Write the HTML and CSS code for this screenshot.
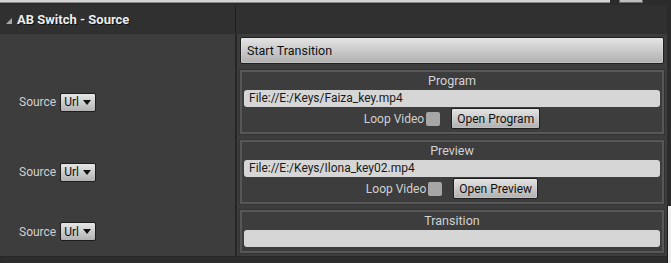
FILE: index.html
```html
<!DOCTYPE html>
<html lang="en">
<head>
    <meta charset="UTF-8">
    <title>AB Switch - Source</title>
    <link rel="stylesheet" href="styles.css">
</head>
<body>
    <div class="topbar">
        <div class="topfield"></div>
        <div class="topbtn"></div>
    </div>

    <div class="frame">
        <div class="details">
            <div class="header">
                <div class="head-left"><span class="arrow"></span>AB Switch - Source</div>
                <div class="head-right"></div>
            </div>

            <div class="row">
                <div class="left"></div>
                <div class="right">
                    <button class="btn wide">Start Transition</button>
                </div>
            </div>

            <div class="row">
                <div class="left">
                    <span class="label">Source</span>
                    <span class="combo">Url<span class="tri"></span></span>
                </div>
                <div class="right">
                    <div class="panel">
                        <div class="title">Program</div>
                        <div class="field">File://E:/Keys/Faiza_key.mp4</div>
                        <div class="loop">
                            <span class="label">Loop Video</span><span class="check"></span>
                            <button class="btn">Open Program</button>
                        </div>
                    </div>
                </div>
            </div>

            <div class="row">
                <div class="left">
                    <span class="label">Source</span>
                    <span class="combo">Url<span class="tri"></span></span>
                </div>
                <div class="right">
                    <div class="panel">
                        <div class="title">Preview</div>
                        <div class="field">File://E:/Keys/Ilona_key02.mp4</div>
                        <div class="loop">
                            <span class="label">Loop Video</span><span class="check"></span>
                            <button class="btn">Open Preview</button>
                        </div>
                    </div>
                </div>
            </div>

            <div class="row">
                <div class="left">
                    <span class="label">Source</span>
                    <span class="combo">Url<span class="tri"></span></span>
                </div>
                <div class="right">
                    <div class="panel short">
                        <div class="title">Transition</div>
                        <div class="field"></div>
                    </div>
                </div>
            </div>

            <div class="footer"></div>
        </div>
        <div class="scroll"></div>
    </div>
</body>
</html>
```

FILE: styles.css
```css
body { margin: 0; background: #2b2b2b; font-family: Roboto, "Liberation Sans", sans-serif; font-size: 12px; color: #d2d2d2; width: 671px; height: 263px; overflow: hidden; }

.topbar { display: flex; height: 4px; }
.topfield { width: 610px; height: 2px; background: #d4d4d4; border-bottom: 1px solid #8a8a8a; }
.topbtn { width: 24px; height: 3px; margin-left: 9px; background: #bdbdbd; border: 1px solid #6a6a6a; border-top: none; box-sizing: border-box; }

.frame { display: flex; }
.details { width: 667px; }
.scroll { width: 3px; margin-top: 202px; height: 61px; background: #ececec; border-left: 1px solid #1c1c1c; }

.header { display: flex; height: 29px; background: #303030; margin-top: 1px; }
.head-left { width: 235px; display: flex; align-items: center; font-weight: bold; font-size: 13px; color: #ececec; text-shadow: 1px 1px 0 #111; }
.head-right { flex: 1; border-left: 1px solid #1e1e1e; }
.arrow { width: 0; height: 0; margin: 2px 5px 0 6px; border-left: 6px solid transparent; border-bottom: 6px solid #a8a8a8; }

.row { display: flex; background: #3d3d3d; }
.left { width: 235px; display: flex; align-items: center; padding-left: 19px; box-sizing: border-box; }
.right { flex: 1; padding: 3px 3px; border-left: 2px solid #262626; }

.label { color: #d0d0d0; }

.combo { display: inline-flex; align-items: center; height: 19px; width: 36px; box-sizing: border-box; margin-left: 4px; padding-left: 3px; color: #111; background: linear-gradient(#e6e6e6, #b2b2b2); border: 1px solid #1e1e1e; border-radius: 2px; }
.tri { width: 0; height: 0; margin-left: 4px; border-left: 4px solid transparent; border-right: 4px solid transparent; border-top: 5px solid #111; }

.btn { font: inherit; color: #111; height: 21px; padding: 0 5px; background: linear-gradient(#e4e4e4, #b0b0b0); border: 1px solid #202020; border-radius: 2px; box-shadow: inset 0 0 0 1px #ededed40; }
.wide { display: block; width: 100%; height: 27px; text-align: left; padding-left: 6px; font-size: 12.5px; }

.panel { height: 64px; box-sizing: border-box; border: 2px solid #575757; outline: 1px solid #333; padding: 1px 2px 0; display: flex; flex-direction: column; align-items: stretch; }
.short { height: 43px; }
.title { text-align: center; height: 16px; line-height: 16px; font-size: 12.5px; }
.field { height: 17px; line-height: 17px; background: #d6d6d6; border-radius: 3px; color: #1a1a1a; padding-left: 5px; margin-top: 1px; }
.loop { display: flex; justify-content: center; align-items: center; margin-top: 1px; }
.check { width: 14px; height: 14px; margin: 0 11px 0 2px; background: #a6a6a6; border-radius: 2px; }

.footer { height: 8px; margin-left: 3px; background: #2d2d2d; border-top: 1px solid #262626; }
```
